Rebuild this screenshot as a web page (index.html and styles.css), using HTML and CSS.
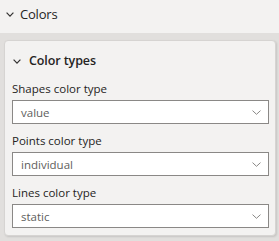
FILE: index.html
```html
<!DOCTYPE html>
<html>
<head>
<meta charset="utf-8">
<link rel="stylesheet" href="styles.css">
</head>
<body>
<div class="pane">
  <div class="section-header">
    <svg class="chev" width="8" height="5" viewBox="0 0 8 5"><path d="M0.6 0.7 L4 4.1 L7.4 0.7" fill="none" stroke="#323130" stroke-width="1.2"/></svg>
    <span class="section-title">Colors</span>
  </div>
  <div class="section-body">
    <div class="card">
      <div class="card-header">
        <svg class="chev" width="8" height="5" viewBox="0 0 8 5"><path d="M0.6 0.7 L4 4.1 L7.4 0.7" fill="none" stroke="#323130" stroke-width="1.2"/></svg>
        <span class="card-title">Color types</span>
      </div>
      <div class="field">
        <div class="label">Shapes color type</div>
        <div class="select"><span class="value">value</span><svg class="dd" width="9" height="5" viewBox="0 0 9 5"><path d="M0.5 0.6 L4.5 4.3 L8.5 0.6" fill="none" stroke="#8a8886" stroke-width="1"/></svg></div>
      </div>
      <div class="field">
        <div class="label">Points color type</div>
        <div class="select"><span class="value">individual</span><svg class="dd" width="9" height="5" viewBox="0 0 9 5"><path d="M0.5 0.6 L4.5 4.3 L8.5 0.6" fill="none" stroke="#8a8886" stroke-width="1"/></svg></div>
      </div>
      <div class="field">
        <div class="label">Lines color type</div>
        <div class="select"><span class="value">static</span><svg class="dd" width="9" height="5" viewBox="0 0 9 5"><path d="M0.5 0.6 L4.5 4.3 L8.5 0.6" fill="none" stroke="#8a8886" stroke-width="1"/></svg></div>
      </div>
    </div>
  </div>
</div>
</body>
</html>
```
FILE: styles.css
```css
html, body {
  margin: 0;
  padding: 0;
  background: #e1dfdd;
  font-family: "Open Sans", "Noto Sans", sans-serif;
  color: #252423;
}
.pane {
  width: 279px;
  height: 241px;
  overflow: hidden;
}
.section-header {
  height: 33px;
  background: #f3f2f1;
  display: flex;
  align-items: center;
  padding: 0 0 5px 6px;
  box-sizing: border-box;
}
.chev {
  display: block;
  flex: none;
}
.section-title {
  margin-left: 6px;
  font-size: 13px;
  line-height: 16px;
  font-weight: 400;
  letter-spacing: -0.2px;
}
.section-body {
  padding: 7px 3px 0 4px;
}
.card {
  background: #f3f2f1;
  border: 1px solid #d6d4d2;
  border-radius: 4px;
  box-shadow: 1px 1px 2px rgba(0,0,0,0.12);
  height: 196px;
  box-sizing: border-box;
  padding: 8px 6px 0 7px;
}
.card-header {
  display: flex;
  align-items: center;
  height: 24px;
  padding-left: 1px;
}
.card-title {
  margin-left: 8px;
  font-size: 12.5px;
  line-height: 16px;
  font-weight: 600;
  letter-spacing: -0.1px;
}
.field {
  margin-top: 8px;
}
.field + .field {
  margin-top: 9px;
}
.label {
  font-size: 11.5px;
  line-height: 16px;
  color: #252423;
}
.select {
  margin-top: 3px;
  height: 24px;
  box-sizing: border-box;
  border: 1px solid #8a8886;
  background: #ffffff;
  display: flex;
  align-items: center;
  justify-content: space-between;
  padding: 0 7px 0 8px;
}
.value {
  font-size: 11.5px;
  color: #605e5c;
}
.dd {
  display: block;
}
```
